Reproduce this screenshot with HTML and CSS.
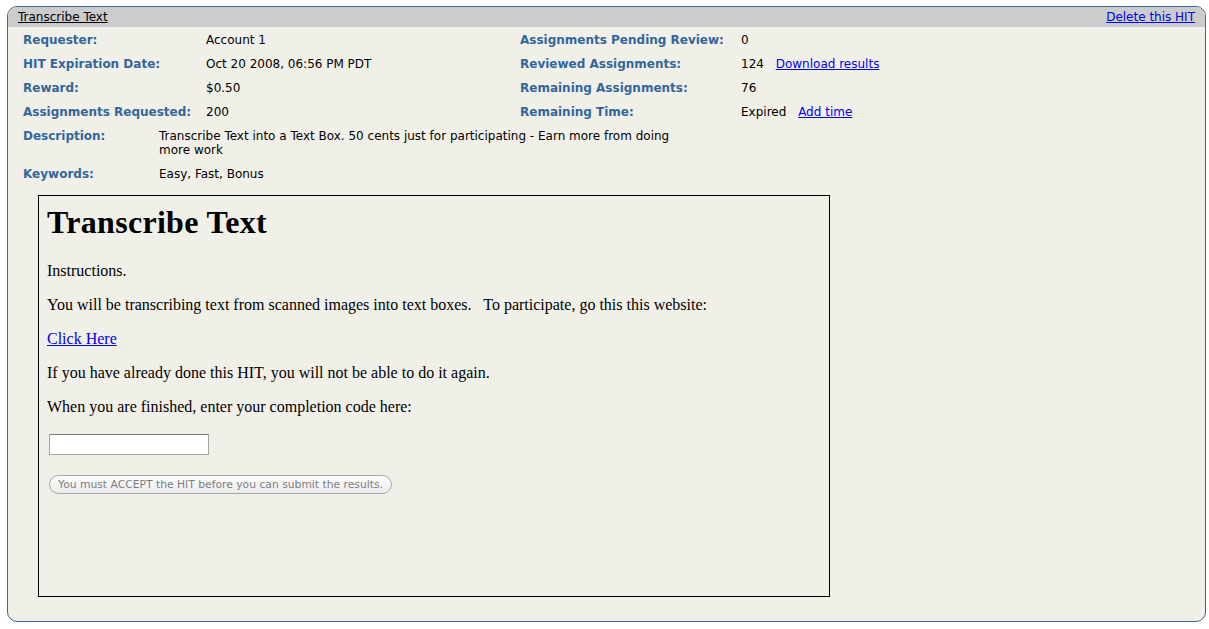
FILE: index.html
```html
<!DOCTYPE html>
<html>
<head>
<meta charset="utf-8">
<link rel="stylesheet" href="styles.css">
</head>
<body>
<div class="panel">
  <div class="panel-head">
    <a class="title-link" href="#">Transcribe Text</a>
    <a class="delete-link" href="#">Delete this HIT</a>
  </div>
  <div class="panel-body">
    <div class="facts">
      <div class="label">Requester:</div>
      <div class="value">Account 1</div>
      <div class="label">Assignments Pending Review:</div>
      <div class="value">0</div>

      <div class="label">HIT Expiration Date:</div>
      <div class="value">Oct 20 2008, 06:56 PM PDT</div>
      <div class="label">Reviewed Assignments:</div>
      <div class="value">124 <a href="#" class="side-link">Download results</a></div>

      <div class="label">Reward:</div>
      <div class="value">$0.50</div>
      <div class="label">Remaining Assignments:</div>
      <div class="value">76</div>

      <div class="label">Assignments Requested:</div>
      <div class="value">200</div>
      <div class="label">Remaining Time:</div>
      <div class="value">Expired <a href="#" class="side-link">Add time</a></div>
    </div>
    <div class="facts-wide">
      <div class="label">Description:</div>
      <div class="value desc">Transcribe Text into a Text Box. 50 cents just for participating - Earn more from doing more work</div>
      <div class="label">Keywords:</div>
      <div class="value">Easy, Fast, Bonus</div>
    </div>
    <div class="preview">
      <h1>Transcribe Text</h1>
      <p>Instructions.</p>
      <p>You will be transcribing text from scanned images into text boxes. &nbsp; To participate, go this this website:</p>
      <p><a href="#">Click Here</a></p>
      <p>If you have already done this HIT, you will not be able to do it again.</p>
      <p>When you are finished, enter your completion code here:</p>
      <div class="code-row"><input type="text" class="code-input"></div>
      <div class="submit-row"><button class="submit-btn" disabled>You must ACCEPT the HIT before you can submit the results.</button></div>
    </div>
  </div>
</div>
</body>
</html>
```
FILE: styles.css
```css
html, body {
  margin: 0;
  padding: 0;
  background: #ffffff;
}
body {
  padding: 6px 3px 7px 7px;
  font-family: "DejaVu Sans", Verdana, sans-serif;
  font-size: 12px;
}
.panel {
  width: 1197px;
  height: 614px;
  border: 1px solid #3a6898;
  border-radius: 10px;
  background: #f0f0e9;
  overflow: hidden;
  display: flex;
  flex-direction: column;
}
.panel-head {
  background: #cccccc;
  height: 20px;
  display: flex;
  justify-content: space-between;
  align-items: center;
  padding: 0 10px 0 10px;
  font-size: 12px;
}
.title-link {
  color: #000000;
}
.delete-link {
  color: #0000ee;
}
.panel-body {
  padding: 1px 0 0 15px;
  color: #000000;
}
.facts {
  display: grid;
  grid-template-columns: 183px 314px 221px 1fr;
  grid-auto-rows: 24px;
  align-items: center;
  line-height: 14px;
}
.label {
  font-weight: bold;
  color: #336699;
}
.side-link {
  color: #0000ee;
  margin-left: 8px;
}
.facts-wide {
  display: grid;
  grid-template-columns: 136px 525px;
  line-height: 14px;
  margin-top: 0;
}
.facts-wide .label,
.facts-wide .value {
  padding: 5px 0;
}
.preview {
  margin: 9px 0 0 15px;
  width: 774px;
  height: 384px;
  border: 1px solid #000000;
  padding: 8px;
  font-family: "Liberation Serif", "Times New Roman", serif;
  font-size: 16px;
  color: #000000;
}
.preview h1 {
  font-size: 32px;
  margin: 0 0 21px 0;
  line-height: 37px;
  letter-spacing: 0.3px;
}
.preview p {
  margin: 0 0 16px 0;
}
.preview a {
  color: #0000ee;
}
.code-row {
  margin-top: 0;
}
.code-input {
  width: 160px;
  height: 21px;
  box-sizing: border-box;
  margin: 2px 0 0 2px;
  border: 1px solid #a5a5a5;
  border-top-color: #7a7a7a;
  background: #ffffff;
}
.submit-row {
  margin-top: 19px;
}
.submit-btn {
  margin: 0 0 0 2px;
  height: 19px;
  width: 343px;
  padding: 0;
  border: 1px solid #a8a8a8;
  border-radius: 10px;
  background: linear-gradient(#fdfdfd, #ececec);
  color: #7d7d7d;
  font-family: "DejaVu Sans", "Lucida Grande", sans-serif;
  font-size: 10.75px;
}
```
